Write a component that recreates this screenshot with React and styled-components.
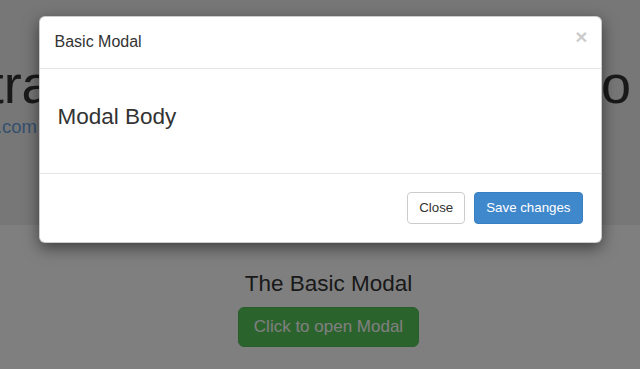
import React from "react";
import styled, { createGlobalStyle } from "styled-components";

const GlobalStyle = createGlobalStyle`
  html, body {
    margin: 0;
    padding: 0;
    background: #fff;
    overflow: hidden;
  }
  body {
    font-family: "Liberation Sans", Arial, Helvetica, sans-serif;
    color: #333;
  }
  * { box-sizing: border-box; }
`;

const Page = styled.div`
  position: relative;
  width: 640px;
  height: 369px;
  overflow: hidden;
`;

const Jumbotron = styled.header`
  height: 225px;
  padding-top: 55px;
  background: #eee;
  overflow: hidden;
`;

const Headline = styled.h1`
  display: flex;
  justify-content: flex-end;
  margin: 0;
  padding-right: 9px;
  font-size: 54px;
  line-height: 59px;
  font-weight: 500;
  white-space: nowrap;
`;

const Lead = styled.p`
  display: flex;
  justify-content: flex-end;
  margin: 0;
  padding-right: 603px;
  font-size: 18.5px;
  line-height: 26px;
  white-space: nowrap;

  a {
    color: #6b9fdc;
    text-decoration: none;
  }
`;

const Demo = styled.section`
  display: flex;
  flex-direction: column;
  align-items: center;
  padding: 47px 0 0 17px;
`;

const DemoTitle = styled.h3`
  margin: 0 0 10px;
  font-size: 22.5px;
  line-height: 24.75px;
  font-weight: 500;
`;

const OpenButton = styled.button`
  padding: 8px 15px;
  font-family: inherit;
  font-size: 17px;
  line-height: 22.67px;
  color: #fff;
  background: #56c65a;
  border: 1px solid #50bc54;
  border-radius: 6px;
  cursor: pointer;
`;

const Backdrop = styled.div`
  position: absolute;
  inset: 0;
  display: flex;
  justify-content: center;
  align-items: flex-start;
  padding-top: 16px;
  background: rgba(0, 0, 0, 0.5);
`;

const Dialog = styled.div`
  width: 563px;
  background: #fff;
  border: 1px solid rgba(0, 0, 0, 0.2);
  border-radius: 6px;
  box-shadow: 0 5px 15px rgba(0, 0, 0, 0.5);
`;

const Header = styled.div`
  display: flex;
  justify-content: space-between;
  align-items: flex-start;
  padding: 14px 13px 14px 15px;
  border-bottom: 1px solid #e5e5e5;
`;

const Title = styled.h4`
  margin: 0;
  font-size: 16px;
  line-height: 22.86px;
  font-weight: 500;
`;

const CloseX = styled.button`
  margin-top: -5px;
  padding: 0;
  font-family: inherit;
  font-size: 21px;
  line-height: 21px;
  font-weight: 700;
  color: #000;
  opacity: 0.2;
  background: transparent;
  border: 0;
  cursor: pointer;
`;

const Body = styled.div`
  padding: 15px 18px;
`;

const BodyText = styled.h3`
  margin: 21px 0 28px;
  font-size: 22.5px;
  line-height: 24.75px;
  font-weight: 500;
`;

const Footer = styled.div`
  display: flex;
  justify-content: flex-end;
  gap: 9px;
  padding: 18px;
  border-top: 1px solid #e5e5e5;
`;

const Button = styled.button`
  padding: 6px 11px;
  font-family: inherit;
  font-size: 13.3px;
  line-height: 18px;
  border-radius: 4px;
  border: 1px solid ${(p) => (p.$primary ? "#3a7fbf" : "#ccc")};
  background: ${(p) => (p.$primary ? "#3f88cb" : "#fff")};
  color: ${(p) => (p.$primary ? "#fff" : "#333")};
  cursor: pointer;
`;

export default function App() {
  return (
    <Page>
      <GlobalStyle />
      <Jumbotron>
        <Headline>Demonstration Modal Popup Demo</Headline>
        <Lead>
          <a href="#">www.example.com</a>
        </Lead>
      </Jumbotron>
      <Demo>
        <DemoTitle>The Basic Modal</DemoTitle>
        <OpenButton>Click to open Modal</OpenButton>
      </Demo>

      <Backdrop>
        <Dialog role="dialog">
          <Header>
            <Title>Basic Modal</Title>
            <CloseX aria-label="Close">×</CloseX>
          </Header>
          <Body>
            <BodyText>Modal Body</BodyText>
          </Body>
          <Footer>
            <Button>Close</Button>
            <Button $primary>Save changes</Button>
          </Footer>
        </Dialog>
      </Backdrop>
    </Page>
  );
}
